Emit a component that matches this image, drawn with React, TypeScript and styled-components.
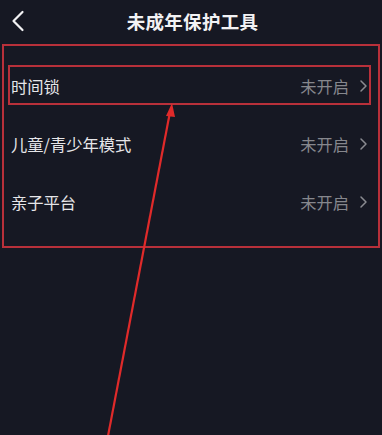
import styled, { createGlobalStyle } from "styled-components";

const GlobalStyle = createGlobalStyle`
  html, body {
    margin: 0;
    padding: 0;
    background: #161823;
  }
  body {
    font-family: "Noto Sans CJK SC", "Noto Sans", sans-serif;
  }
`;

const items = [
  { label: "时间锁", status: "未开启", marked: true },
  { label: "儿童/青少年模式", status: "未开启", marked: false },
  { label: "亲子平台", status: "未开启", marked: false },
];

function App() {
  return (
    <Page>
      <GlobalStyle />

      {/* 상단 바 */}
      <TopBar>
        <BackButton>
          <svg width="14" height="22" viewBox="0 0 14 22">
            <polyline
              points="11.5,2 2.5,11 11.5,20"
              fill="none"
              stroke="#f2f2f4"
              strokeWidth="2.2"
              strokeLinecap="round"
              strokeLinejoin="round"
            />
          </svg>
        </BackButton>
        <Title>未成年保护工具</Title>
      </TopBar>

      {/* 목록 (빨간 박스 표시) */}
      <List>
        {items.map((item) => (
          <Row key={item.label} marked={item.marked}>
            <Label>{item.label}</Label>
            <Status>
              {item.status}
              <svg width="9" height="14" viewBox="0 0 9 14">
                <polyline
                  points="2,2 7,7 2,12"
                  fill="none"
                  stroke="#8a8b91"
                  strokeWidth="1.5"
                  strokeLinecap="round"
                  strokeLinejoin="round"
                />
              </svg>
            </Status>
          </Row>
        ))}
      </List>

      {/* 화살표 */}
      <Arrow viewBox="0 0 382 435" width="382" height="435">
        <line x1="108" y1="436" x2="170" y2="112" stroke="#e02a2a" strokeWidth="2.2" />
        <polygon points="172,103 166,116 175,117" fill="#e02a2a" />
      </Arrow>
    </Page>
  );
}

export default App;

const Page = styled.div`
  position: relative;
  width: 382px;
  height: 435px;
  overflow: hidden;
  background: #161823;
`;

const TopBar = styled.header`
  height: 42px;
  display: flex;
  align-items: center;
  justify-content: center;
  position: relative;
`;

const BackButton = styled.span`
  position: absolute;
  left: 11px;
  top: 10px;
  display: flex;
`;

const Title = styled.h1`
  margin: 0 0 0 3px;
  font-size: 18.5px;
  font-weight: 700;
  color: #f2f2f4;
  letter-spacing: 0.3px;
`;

const List = styled.div`
  margin: 2px 2px 0 2px;
  border: 2px solid #b8303a;
  padding: 19px 7px 25px 4px;
  display: flex;
  flex-direction: column;
  gap: 18px;
`;

const Row = styled.div<{ marked: boolean }>`
  box-sizing: border-box;
  height: 40px;
  display: flex;
  align-items: center;
  justify-content: space-between;
  padding: 2px 1px 0 1px;
  border: 2px solid ${(p) => (p.marked ? "#b8303a" : "transparent")};
`;

const Label = styled.span`
  font-size: 16.3px;
  color: #e6e6e9;
`;

const Status = styled.span`
  display: flex;
  align-items: center;
  gap: 10px;
  font-size: 16.3px;
  color: #86878d;
`;

const Arrow = styled.svg`
  position: absolute;
  left: 0;
  top: 0;
  pointer-events: none;
`;
